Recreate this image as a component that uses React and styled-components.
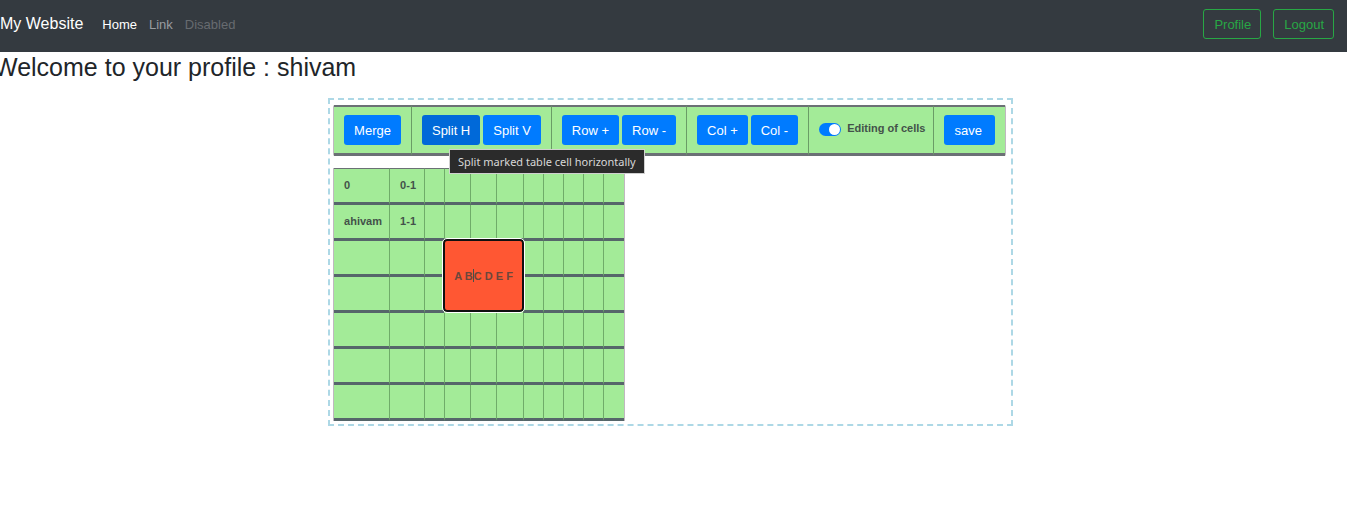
import React from "react";
import styled, { createGlobalStyle } from "styled-components";

const GlobalStyle = createGlobalStyle`
  *, *::before, *::after { box-sizing: border-box; }
  body {
    margin: 0;
    background: #fff;
    color: #212529;
    font-family: "Liberation Sans", Arial, sans-serif;
    font-size: 14px;
    line-height: 20px;
    overflow-x: hidden;
  }
`;

const Navbar = styled.nav`
  display: flex;
  align-items: center;
  height: 52px;
  padding: 0 13px 4px 0;
  background: #343a40;
`;

const Brand = styled.a`
  margin-right: 19px;
  color: #fff;
  font-size: 16px;
  text-decoration: none;
`;

const NavList = styled.ul`
  display: flex;
  flex: 1;
  gap: 12px;
  margin: 0;
  padding: 0;
  list-style: none;
`;

const NavLink = styled.a`
  color: ${(p) => (p.$active ? "#fff" : p.$disabled ? "#676b70" : "#9a9da0")};
  font-size: 13px;
  text-decoration: none;
`;

const NavActions = styled.div`
  display: flex;
  gap: 12px;
`;

const OutlineButton = styled.button`
  height: 30px;
  padding: 1px 9px 0 10px;
  border: 1px solid #28a745;
  border-radius: 3px;
  background: transparent;
  color: #28a745;
  font: 13px/20px "Liberation Sans", Arial, sans-serif;
`;

const Main = styled.main`
  margin: 0 0 0 -6px;
`;

const Title = styled.h1`
  margin: 0 0 15px;
  font-size: 25px;
  line-height: 31px;
  font-weight: 400;
`;

const Editor = styled.section`
  width: fit-content;
  margin: 0 auto;
  padding: 5px 5px 3px 3px;
  border: 2px dashed #add8e6;
`;

const Toolbar = styled.div`
  display: flex;
  width: fit-content;
  margin-bottom: 12px;
  border: solid #c0b8c0;
  border-width: 0 1px;
  border-radius: 2px;
  background: #a3eb98;
`;

const Group = styled.div`
  display: flex;
  align-items: center;
  gap: 3px;
  height: 51px;
  padding: 0 ${(p) => (p.$tight ? 8 : 10)}px 0 10px;
  border: solid #6b7075;
  border-width: 2px 0 3px;

  & + & { border-left: 1px solid #6a9c66; }
`;

const ToolButton = styled.button`
  height: 30px;
  padding: 2px ${(p) => (p.$wide ? 13 : 10)}px 0 10px;
  border: 0;
  border-radius: 3px;
  background: ${(p) => (p.$hovered ? "#0069d9" : "#007bff")};
  color: #fff;
  font: 13px/20px "Liberation Sans", Arial, sans-serif;
`;

const ToolAnchor = styled.span`
  position: relative;
`;

const Tooltip = styled.span`
  position: absolute;
  top: 34px;
  left: 27px;
  z-index: 2;
  padding: 0 8px;
  border: 1px solid #d0d0d0;
  background: #2b2b2b;
  color: #d8d8d8;
  font: 11px/23px "Noto Sans", sans-serif;
  white-space: nowrap;
`;

const SwitchLabel = styled.label`
  display: flex;
  align-items: center;
  gap: 6px;
  padding-bottom: 4px;
  color: #43524a;
  font-size: 11px;
  font-weight: 700;
`;

const Switch = styled.input`
  appearance: none;
  display: flex;
  justify-content: flex-end;
  width: 22px;
  height: 13px;
  margin: 3px 0 0;
  padding: 1px;
  border-radius: 7px;
  background: #007bff;

  &::before {
    content: "";
    width: 11px;
    height: 11px;
    border-radius: 50%;
    background: #fff;
  }
`;

const Grid = styled.table`
  width: 292px;
  table-layout: fixed;
  border-spacing: 0;
  border: solid #c0b8c0;
  border-width: 0 1px;
  background: #a3eb98;
`;

const Row = styled.tr`
  height: 36px;

  &:first-child { height: 37px; }
  &:first-child > td { border-top: 1px solid #6b7075; }
`;

const Cell = styled.td`
  padding: 0 0 2px 10px;
  border-bottom: 3px solid #56666a;
  color: #43524a;
  font-size: 11px;
  font-weight: 700;
  white-space: nowrap;

  & + & { border-left: 1px solid #6fac69; }
`;

const MarkedCell = styled.td`
  padding: 0;
`;

const Marked = styled.div`
  position: relative;
  z-index: 1;
  display: flex;
  align-items: center;
  justify-content: center;
  height: 73px;
  margin: -2px -1px 1px -1px;
  border: 2px solid #101010;
  border-radius: 4px;
  outline: 1px solid #fff;
  background: #ff5733;
  color: #6b473c;
  font-size: 11px;
  font-weight: 700;
`;

const Caret = styled.span`
  width: 1px;
  height: 13px;
  background: #43524a;
`;

const columns = [55, 35, 20, 26, 26, 27, 20, 20, 20, 20, 21];
const rows = [["0", "0-1"], ["ahivam", "1-1"], [], [], [], [], []];

function GridRow({ cells, index }) {
  const items = [];
  for (let c = 0; c < columns.length; c++) {
    const covered = c > 2 && c < 6;
    if (index === 2 && c === 3) {
      items.push(
        <MarkedCell key={c} colSpan={3} rowSpan={2}>
          <Marked>
            <span>A B</span>
            <Caret />
            <span>C D E F</span>
          </Marked>
        </MarkedCell>
      );
    } else if (!((index === 2 || index === 3) && covered)) {
      items.push(<Cell key={c}>{cells[c]}</Cell>);
    }
  }
  return <Row>{items}</Row>;
}

export default function App() {
  return (
    <>
      <GlobalStyle />
      <Navbar>
        <Brand href="#">My Website</Brand>
        <NavList>
          <li><NavLink href="#" $active>Home</NavLink></li>
          <li><NavLink href="#">Link</NavLink></li>
          <li><NavLink href="#" $disabled aria-disabled="true">Disabled</NavLink></li>
        </NavList>
        <NavActions>
          <OutlineButton>Profile</OutlineButton>
          <OutlineButton>Logout</OutlineButton>
        </NavActions>
      </Navbar>
      <Main>
        <Title>Welcome to your profile : shivam</Title>
        <Editor>
          <Toolbar role="toolbar" aria-label="Table tools">
            <Group><ToolButton>Merge</ToolButton></Group>
            <Group>
              <ToolAnchor>
                <ToolButton $hovered aria-describedby="split-h-tip">Split H</ToolButton>
                <Tooltip id="split-h-tip" role="tooltip">Split marked table cell horizontally</Tooltip>
              </ToolAnchor>
              <ToolButton>Split V</ToolButton>
            </Group>
            <Group><ToolButton>Row +</ToolButton><ToolButton>Row -</ToolButton></Group>
            <Group><ToolButton>Col +</ToolButton><ToolButton>Col -</ToolButton></Group>
            <Group $tight>
              <SwitchLabel>
                <Switch type="checkbox" role="switch" defaultChecked />
                Editing of cells
              </SwitchLabel>
            </Group>
            <Group><ToolButton $wide>save</ToolButton></Group>
          </Toolbar>
          <Grid>
            <colgroup>{columns.map((w, i) => <col key={i} width={w} />)}</colgroup>
            <tbody>{rows.map((cells, i) => <GridRow key={i} cells={cells} index={i} />)}</tbody>
          </Grid>
        </Editor>
      </Main>
    </>
  );
}
